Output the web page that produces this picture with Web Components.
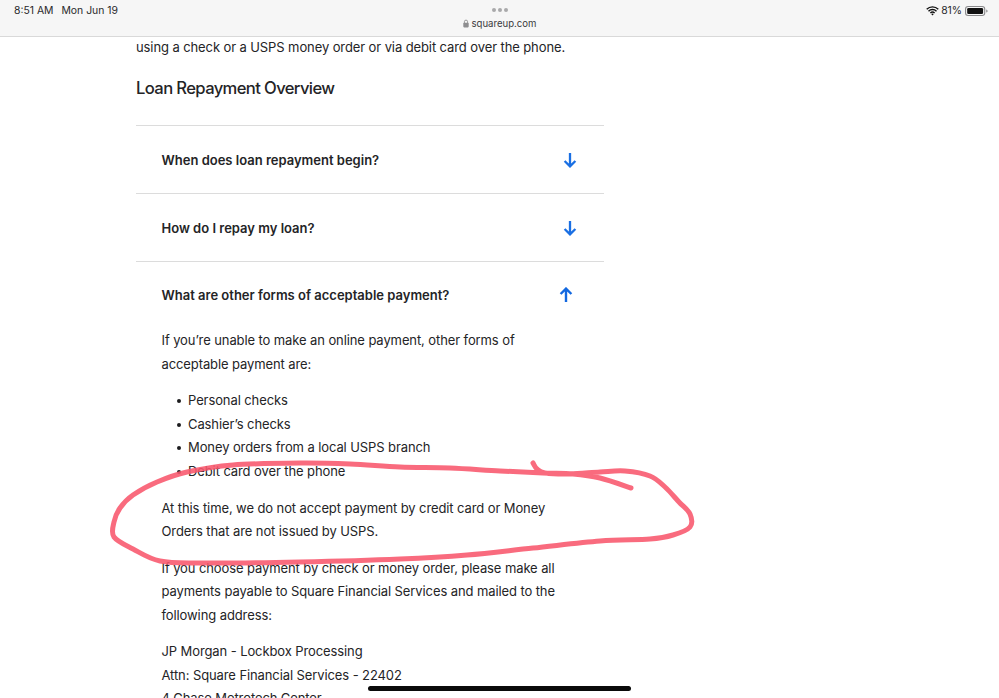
<!DOCTYPE html>
<html lang="en">
<head>
<meta charset="utf-8">
<title>Loan Repayment Overview</title>
<style>
    html, body {
        margin: 0;
        height: 698px;
        overflow: hidden;
        background: #fff;
        font-family: Inter, "Noto Sans", "Liberation Sans", sans-serif;
        color: #242426;
    }
    body { position: relative; }
</style>
</head>
<body>
<safari-bar time="8:51 AM" date="Mon Jun 19" url="squareup.com" battery="81%"></safari-bar>

<article-page>
    <p slot="intro">using a check or a USPS money order or via debit card over the phone.</p>
    <span slot="heading">Loan Repayment Overview</span>

    <faq-item question="When does loan repayment begin?"></faq-item>
    <faq-item question="How do I repay my loan?"></faq-item>
    <faq-item question="What are other forms of acceptable payment?" open>
        <faq-text>If you’re unable to make an online payment, other forms of<br>acceptable payment are:</faq-text>
        <faq-list>
            <li>Personal checks</li>
            <li>Cashier’s checks</li>
            <li>Money orders from a local USPS branch</li>
            <li>Debit card over the phone</li>
        </faq-list>
        <faq-text>At this time, we do not accept payment by credit card or Money<br>Orders that are not issued by USPS.</faq-text>
        <faq-text>If you choose payment by check or money order, please make all<br>payments payable to Square Financial Services and mailed to the<br>following address:</faq-text>
        <faq-text>JP Morgan - Lockbox Processing<br>Attn: Square Financial Services - 22402<br>4 Chase Metrotech Center</faq-text>
    </faq-item>
</article-page>

<pen-scribble></pen-scribble>
<home-indicator></home-indicator>

<script>
class safariBar extends HTMLElement {
    constructor() {
        super();
        this.attachShadow({ mode: "open" });
    }

    connectedCallback() {
        const time = this.getAttribute("time") || "";
        const date = this.getAttribute("date") || "";
        const url = this.getAttribute("url") || "";
        const battery = this.getAttribute("battery") || "";

        this.shadowRoot.innerHTML = `
            <style>
                :host {
                    display: grid;
                    grid-template-columns: 1fr auto 1fr;
                    height: 36px;
                    background: #f6f6f6;
                    border-bottom: 1px solid #d9d9d9;
                    font-size: 10.4px;
                    color: #2a2a2c;
                }
                .left {
                    display: flex;
                    gap: 8px;
                    padding: 5px 0 0 14px;
                    line-height: 12px;
                }
                .middle {
                    display: flex;
                    flex-direction: column;
                    align-items: center;
                    padding-top: 8px;
                }
                .dots { display: flex; gap: 2px; height: 4px; }
                .dots i { width: 4px; height: 4px; border-radius: 50%; background: #a9a9ab; }
                .url {
                    display: flex;
                    align-items: center;
                    gap: 3px;
                    margin-top: 5px;
                    line-height: 13px;
                    font-size: 9.6px;
                    color: #3a3a3c;
                }
                .right {
                    display: flex;
                    justify-content: flex-end;
                    align-items: flex-start;
                    gap: 3px;
                    padding: 5px 11px 0 0;
                    line-height: 12px;
                }
                .wifi { margin: 1px -1px 0 0; }
                .batt { margin-top: 1px; }
                svg { display: block; }
            </style>
            <div class="left"><span>${time}</span><span>${date}</span></div>
            <div class="middle">
                <div class="dots"><i></i><i></i><i></i></div>
                <div class="url">
                    <svg width="6" height="9" viewBox="0 0 6 9"><path d="M1.4 4V2.7a1.6 1.6 0 0 1 3.2 0V4" fill="none" stroke="#8e8e90" stroke-width=".9"/><rect x=".3" y="3.8" width="5.4" height="4.6" rx=".8" fill="#8e8e90"/></svg>
                    <span>${url}</span>
                </div>
            </div>
            <div class="right">
                <svg class="wifi" width="13" height="10" viewBox="0 0 13 10">
                    <path d="M.7 3.3a8.2 8.2 0 0 1 11.6 0M2.5 5.2a5.6 5.6 0 0 1 8 0M4.4 7a3 3 0 0 1 4.2 0" fill="none" stroke="#111" stroke-width="1.4"/>
                    <path d="M5.2 8 6.5 9.4 7.8 8a1.9 1.9 0 0 0-2.6 0z" fill="#111"/>
                </svg>
                <span>${battery}</span>
                <svg class="batt" width="23" height="10" viewBox="0 0 21 10" preserveAspectRatio="none">
                    <rect x=".5" y=".5" width="17.5" height="9" rx="2.4" fill="none" stroke="#8a8a8c"/>
                    <rect x="2" y="2" width="14.5" height="6" rx="1.2" fill="#111"/>
                    <path d="M19.4 3.4c.8.3 1.2.9 1.2 1.6s-.4 1.3-1.2 1.6z" fill="#8a8a8c"/>
                </svg>
            </div>
        `;
    }
}

class articlePage extends HTMLElement {
    constructor() {
        super();
        this.attachShadow({ mode: "open" });
        this.shadowRoot.innerHTML = `
            <style>
                :host {
                    display: block;
                    width: 468px;
                    margin-left: 136px;
                    font-size: 13px;
                    letter-spacing: -0.1px;
                }
                .intro { height: 20px; line-height: 20px; }
                ::slotted(p) { margin: 0; }
                h2 {
                    margin: 20px 0 26px;
                    font-size: 16.6px;
                    line-height: 22px;
                    font-weight: 500;
                    letter-spacing: -0.62px;
                }
            </style>
            <div class="intro"><slot name="intro"></slot></div>
            <h2><slot name="heading"></slot></h2>
            <slot></slot>
        `;
    }
}

class faqItem extends HTMLElement {
    constructor() {
        super();
        this.attachShadow({ mode: "open" });
    }

    connectedCallback() {
        const question = this.getAttribute("question") || "";
        const open = this.hasAttribute("open");
        // the open row's arrow sits a little further left than the closed ones
        const arrow = open
            ? `<svg width="14" height="16" viewBox="0 0 14 16" style="margin-right:31px"><path d="M7 15V1.8M1.6 7 7 1.6 12.4 7" fill="none" stroke="#1268e0" stroke-width="2.4"/></svg>`
            : `<svg width="14" height="16" viewBox="0 0 14 16" style="margin-right:27px"><path d="M7 1v13.2M1.6 9 7 14.4 12.4 9" fill="none" stroke="#1a6fe3" stroke-width="2.3"/></svg>`;

        this.shadowRoot.innerHTML = `
            <style>
                :host {
                    display: block;
                    border-top: 1px solid #dcdcdc;
                }
                .row {
                    display: flex;
                    justify-content: space-between;
                    align-items: center;
                    box-sizing: border-box;
                    height: 67px;
                    padding-left: 25.5px;
                    font-weight: 600;
                    font-size: 13px;
                    letter-spacing: 0;
                }
                :host([open]) .row { padding-bottom: 2px; }
                .body { padding-left: 25.5px; }
                svg { display: block; }
            </style>
            <div class="row"><span>${question}</span>${arrow}</div>
            <div class="body"><slot></slot></div>
        `;
    }
}

class faqText extends HTMLElement {
    constructor() {
        super();
        this.attachShadow({ mode: "open" });
        this.shadowRoot.innerHTML = `
            <style>
                :host {
                    display: block;
                    line-height: 23.5px;
                    margin-bottom: 13px;
                }
            </style>
            <slot></slot>
        `;
    }
}

class faqList extends HTMLElement {
    constructor() {
        super();
        this.attachShadow({ mode: "open" });
        this.shadowRoot.innerHTML = `
            <style>
                :host {
                    display: block;
                    padding-left: 26.5px;
                    margin-bottom: 13.5px;
                    line-height: 23.5px;
                }
                ::slotted(li) { list-style: none; }
                ::slotted(li)::before {
                    content: "";
                    display: inline-block;
                    width: 4px;
                    height: 4px;
                    margin: 0 7.5px 2px -11.5px;
                    border-radius: 50%;
                    background: #1c1c1e;
                }
            </style>
            <slot></slot>
        `;
    }
}

// hand drawn ring on top of the page, its place on the page is the content
class penScribble extends HTMLElement {
    constructor() {
        super();
        this.attachShadow({ mode: "open" });
        const points = [
            [631, 488], [600, 478], [573, 474], [543, 473], [500, 471], [450, 468], [400, 467],
            [350, 464], [300, 463], [233, 465], [187, 472], [157, 482], [133, 495], [120, 508],
            [114, 522], [114, 537], [133, 549], [160, 561], [200, 563], [300, 562], [400, 559],
            [467, 555], [533, 548], [600, 541], [650, 539], [673, 535], [690, 527], [690, 514],
            [679, 502], [665, 487], [650, 476], [625, 471], [600, 472], [570, 474], [545, 473],
            [537, 469], [533, 463]
        ];
        this.shadowRoot.innerHTML = `
            <style>
                :host {
                    position: absolute;
                    left: 0;
                    top: 0;
                    width: 999px;
                    height: 698px;
                    pointer-events: none;
                }
                svg { display: block; }
            </style>
            <svg width="999" height="698" viewBox="0 0 999 698">
                <path d="${this.smooth(points)}" fill="none" stroke="#f8566c" stroke-opacity=".88" stroke-width="5" stroke-linecap="round" stroke-linejoin="round"/>
            </svg>
        `;
    }

    // catmull-rom through the traced points
    smooth(p) {
        let d = `M${p[0][0]} ${p[0][1]}`;
        for (let i = 0; i < p.length - 1; i++) {
            const a = p[i - 1] || p[i];
            const b = p[i];
            const c = p[i + 1];
            const e = p[i + 2] || c;
            const x1 = b[0] + (c[0] - a[0]) / 6;
            const y1 = b[1] + (c[1] - a[1]) / 6;
            const x2 = c[0] - (e[0] - b[0]) / 6;
            const y2 = c[1] - (e[1] - b[1]) / 6;
            d += `C${x1.toFixed(1)} ${y1.toFixed(1)} ${x2.toFixed(1)} ${y2.toFixed(1)} ${c[0]} ${c[1]}`;
        }
        return d;
    }
}

class homeIndicator extends HTMLElement {
    constructor() {
        super();
        this.attachShadow({ mode: "open" });
        this.shadowRoot.innerHTML = `
            <style>
                :host {
                    position: absolute;
                    left: 368px;
                    top: 686px;
                    width: 263px;
                    height: 5px;
                    border-radius: 3px;
                    background: #0a0a0a;
                }
            </style>
        `;
    }
}

customElements.define("safari-bar", safariBar);
customElements.define("article-page", articlePage);
customElements.define("faq-item", faqItem);
customElements.define("faq-text", faqText);
customElements.define("faq-list", faqList);
customElements.define("pen-scribble", penScribble);
customElements.define("home-indicator", homeIndicator);
</script>
</body>
</html>
